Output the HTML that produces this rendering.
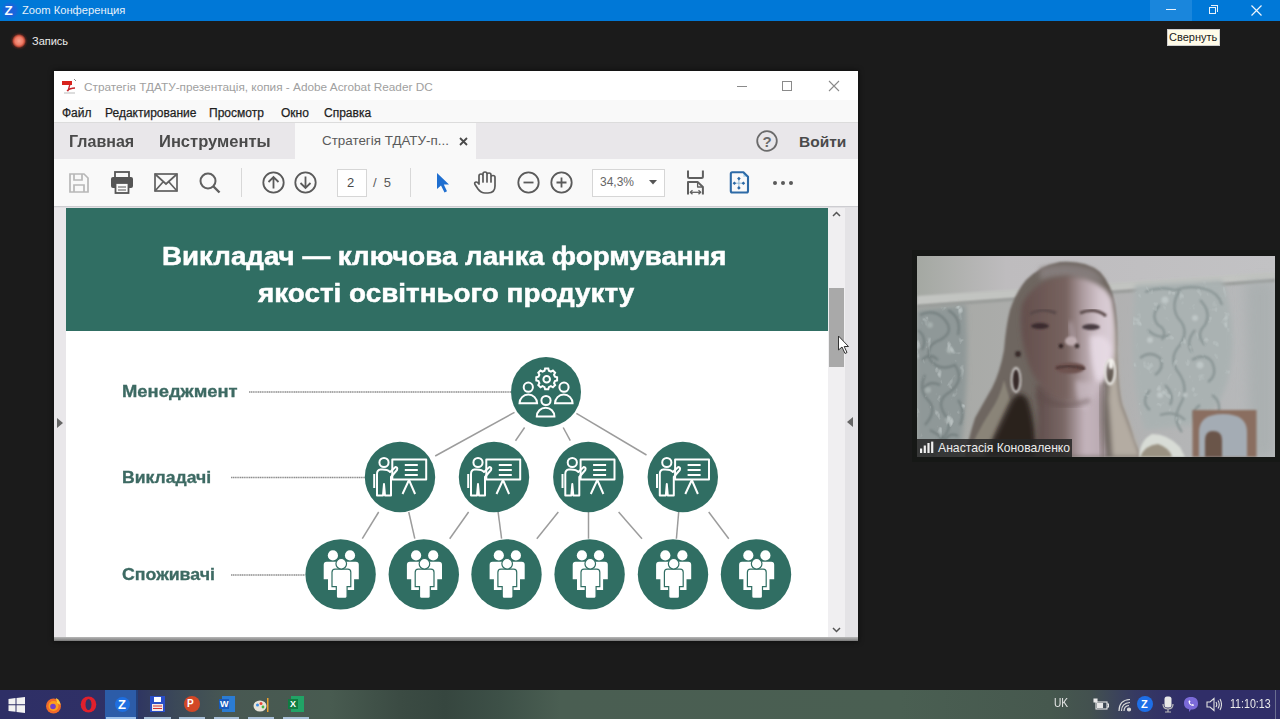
<!DOCTYPE html>
<html><head><meta charset="utf-8">
<style>
*{margin:0;padding:0;box-sizing:border-box}
html,body{width:1280px;height:719px;overflow:hidden;background:#1b1b1b;font-family:"Liberation Sans",sans-serif;position:relative}
.a{position:absolute}
.t{position:absolute;white-space:nowrap;line-height:1}
</style></head><body>

<!-- ZOOM TITLE BAR -->
<div class="a" style="left:0;top:0;width:1280px;height:21px;background:#0078d7"></div>
<div class="a" style="left:1150px;top:0;width:42px;height:21px;background:#1a86dc"></div>
<div id="ztitle">
<div class="a" style="left:1px;top:1px;width:18px;height:19px;border-radius:9px;background:radial-gradient(circle closest-side,#1a64dc 60%,rgba(26,100,220,0) 100%)"></div>
<div class="t" style="left:4.5px;top:3.5px;font-size:13.5px;font-weight:bold;color:#f4fbff">Z</div>
<div class="t" style="left:22px;top:5px;font-size:11.2px;color:#e6f0fa">Zoom Конференция</div>
<div class="a" style="left:1166px;top:9px;width:10px;height:1px;background:#e8f2fc"></div>
<div class="a" style="left:1209px;top:7px;width:7px;height:7px;border:1px solid #e8f2fc"></div>
<div class="a" style="left:1211px;top:5px;width:7px;height:7px;border-top:1px solid #e8f2fc;border-right:1px solid #e8f2fc"></div>
<svg class="a" style="left:1251px;top:5px" width="11" height="11"><path d="M0.5,0.5 L10.5,10.5 M10.5,0.5 L0.5,10.5" stroke="#eef5fc" stroke-width="1.2"/></svg>
<div class="a" style="left:9.5px;top:31.5px;width:18px;height:18px;border-radius:9px;background:radial-gradient(circle closest-side,#f6a290 0%,#ee7a64 45%,#c04c3a 62%,rgba(120,40,30,0.4) 78%,rgba(27,27,27,0) 100%)"></div>
<div class="t" style="left:32px;top:36px;font-size:11px;color:#ececec">Запись</div>
<div class="a" style="left:1167px;top:29px;width:53px;height:17px;background:#fffbe8;border:1px solid #cfcfcf"></div>
<div class="t" style="left:1169px;top:32px;font-size:11px;color:#1a1a1a">Свернуть</div>
</div>

<!-- ACROBAT WINDOW -->
<div class="a" style="left:54px;top:71px;width:804px;height:570px;background:#ffffff;box-shadow:0 0 5px 1px rgba(0,0,0,0.45)"></div>
<div id="acro">
<!-- title -->
<svg class="a" style="left:61px;top:78px" width="18" height="17" viewBox="0 0 18 17">
<path d="M1,3 L11,3 L11,7 L1,7 Z" fill="#d8221c"/>
<path d="M9,6 L7,13 M6,13 C8,11 11,10 14,10" stroke="#c8242a" stroke-width="1.3" fill="none"/>
<path d="M13,1 L15,3" stroke="#888" stroke-width="1"/>
<path d="M3,15 L14,15" stroke="#bbb" stroke-width="1"/>
</svg>
<div class="t" style="left:84px;top:82px;font-size:11.8px;color:#a0a0a0">Стратегія ТДАТУ-презентація, копия - Adobe Acrobat Reader DC</div>
<div class="a" style="left:737px;top:86px;width:10px;height:1px;background:#8a8a8a"></div>
<div class="a" style="left:782px;top:81px;width:10px;height:10px;border:1px solid #8a8a8a"></div>
<svg class="a" style="left:828px;top:80px" width="12" height="12"><path d="M1,1 L11,11 M11,1 L1,11" stroke="#8a8a8a" stroke-width="1.1"/></svg>
<!-- menu -->
<div class="a" style="left:54px;top:100px;width:804px;height:22px;background:#f9f9f9"></div>
<div class="t" style="left:62px;top:107px;font-size:12px;color:#1e1e1e;-webkit-text-stroke:0.25px #1e1e1e">Файл</div>
<div class="t" style="left:105px;top:107px;font-size:12px;color:#1e1e1e;-webkit-text-stroke:0.25px #1e1e1e">Редактирование</div>
<div class="t" style="left:209px;top:107px;font-size:12px;color:#1e1e1e;-webkit-text-stroke:0.25px #1e1e1e">Просмотр</div>
<div class="t" style="left:281px;top:107px;font-size:12px;color:#1e1e1e;-webkit-text-stroke:0.25px #1e1e1e">Окно</div>
<div class="t" style="left:324px;top:107px;font-size:12px;color:#1e1e1e;-webkit-text-stroke:0.25px #1e1e1e">Справка</div>
<!-- tab bar -->
<div class="a" style="left:54px;top:122px;width:804px;height:1px;background:#dcdcdc"></div>
<div class="a" style="left:54px;top:123px;width:241px;height:36px;background:#e9e7ea"></div>
<div class="a" style="left:476px;top:123px;width:382px;height:36px;background:#e9e7ea"></div>
<div class="a" style="left:295px;top:123px;width:181px;height:36px;background:#f9f9f9"></div>
<div class="t" style="left:69px;top:134px;font-size:16.8px;font-weight:bold;color:#4a4a4a;transform-origin:0 0;transform:scaleX(0.955)">Главная</div>
<div class="t" style="left:159px;top:134px;font-size:16.8px;font-weight:bold;color:#4a4a4a;transform-origin:0 0;transform:scaleX(0.985)">Инструменты</div>
<div class="t" style="left:322px;top:134px;font-size:13.4px;color:#5a5a5a">Стратегія ТДАТУ-п...</div>
<svg class="a" style="left:459px;top:137px" width="9" height="9"><path d="M1,1 L8,8 M8,1 L1,8" stroke="#4a4a4a" stroke-width="1.8"/></svg>
<svg class="a" style="left:756px;top:130px" width="22" height="22" viewBox="0 0 22 22"><circle cx="11" cy="11" r="9.8" fill="none" stroke="#6b6b6b" stroke-width="1.8"/><text x="11" y="16.5" text-anchor="middle" font-family="Liberation Sans" font-weight="bold" font-size="15" fill="#6b6b6b">?</text></svg>
<div class="t" style="left:799px;top:134px;font-size:15.5px;font-weight:bold;color:#4a4a4a">Войти</div>
<!-- toolbar -->
<div class="a" style="left:54px;top:159px;width:804px;height:47px;background:#f9f9f9"></div>
<div class="a" style="left:54px;top:206px;width:804px;height:1px;background:#cdcdd1"></div><div class="a" style="left:54px;top:207px;width:804px;height:1px;background:#e2e1e4"></div>
<!-- save -->
<svg class="a" style="left:68px;top:172px" width="22" height="22" viewBox="0 0 22 22" fill="none" stroke="#b8b8b8" stroke-width="1.7">
<path d="M2,2 L16,2 L20,6 L20,20 L2,20 Z"/><path d="M6,2 L6,8 L14,8 L14,2"/><path d="M6,20 L6,13 L16,13 L16,20"/></svg>
<!-- print -->
<svg class="a" style="left:110px;top:171px" width="24" height="23" viewBox="0 0 24 23">
<rect x="5" y="1" width="14" height="6" fill="none" stroke="#555" stroke-width="1.8"/>
<rect x="1" y="6" width="22" height="11" rx="2" fill="#555"/>
<rect x="5.5" y="12" width="13" height="10" fill="#fafafa" stroke="#555" stroke-width="1.8"/>
<path d="M8,16 L16,16 M8,19 L16,19" stroke="#555" stroke-width="1.2"/></svg>
<!-- mail -->
<svg class="a" style="left:154px;top:173px" width="24" height="19" viewBox="0 0 24 19" fill="none" stroke="#606060" stroke-width="1.7">
<rect x="1" y="1" width="22" height="17"/><path d="M1,1 L12,11 L23,1 M1,18 L9,9 M23,18 L15,9"/></svg>
<!-- search -->
<svg class="a" style="left:199px;top:172px" width="22" height="22" viewBox="0 0 22 22" fill="none" stroke="#606060" stroke-width="2">
<circle cx="9" cy="9" r="7.5"/><path d="M14.5,14.5 L20.5,20.5" stroke-width="2.4"/></svg>
<div class="a" style="left:241px;top:168px;width:1px;height:29px;background:#d8d8d8"></div>
<!-- up/down -->
<svg class="a" style="left:262px;top:171px" width="23" height="23" viewBox="0 0 23 23" fill="none" stroke="#5a5a5a" stroke-width="1.8">
<circle cx="11.5" cy="11.5" r="10.2"/><path d="M11.5,17.5 L11.5,6 M6.5,11 L11.5,6 L16.5,11"/></svg>
<svg class="a" style="left:294px;top:171px" width="23" height="23" viewBox="0 0 23 23" fill="none" stroke="#5a5a5a" stroke-width="1.8">
<circle cx="11.5" cy="11.5" r="10.2"/><path d="M11.5,5.5 L11.5,17 M6.5,12 L11.5,17 L16.5,12"/></svg>
<div class="a" style="left:337px;top:169px;width:30px;height:28px;background:#fff;border:1px solid #d6d6d6"></div>
<div class="t" style="left:347px;top:176px;font-size:13px;color:#4a4a4a">2</div>
<div class="t" style="left:373px;top:176px;font-size:13px;color:#5a5a5a">/&nbsp;&nbsp;5</div>
<div class="a" style="left:410px;top:168px;width:1px;height:29px;background:#d8d8d8"></div>
<!-- cursor -->
<svg class="a" style="left:435px;top:172px" width="16" height="21" viewBox="0 0 16 21">
<path d="M2,1 L2,17 L6,13.5 L9.5,20.5 L12,19.3 L8.8,12.5 L14,12.5 Z" fill="#1f6fd0"/></svg>
<!-- hand -->
<svg class="a" style="left:473px;top:171px" width="25" height="24" viewBox="0 0 25 24" fill="none" stroke="#5a5a5a" stroke-width="1.7" stroke-linejoin="round">
<path d="M6,13 L6,5 Q6,3 8,3 Q10,3 10,5 L10,11 L10,3 Q10,1 12,1 Q14,1 14,3 L14,11 L14,3.5 Q14,2 16,2 Q18,2 18,4 L18,11 L18,6 Q18,4.5 20,4.5 Q22,4.5 22,6.5 L22,15 Q22,22 15,22 L12,22 Q8,22 5,18 L2,13.5 Q1,11.5 3,11 Q4.5,10.8 6,13 Z"/></svg>
<!-- zoom out / in -->
<svg class="a" style="left:517px;top:171px" width="23" height="23" viewBox="0 0 23 23" fill="none" stroke="#5a5a5a" stroke-width="1.8">
<circle cx="11.5" cy="11.5" r="10.2"/><path d="M6.5,11.5 L16.5,11.5"/></svg>
<svg class="a" style="left:550px;top:171px" width="23" height="23" viewBox="0 0 23 23" fill="none" stroke="#5a5a5a" stroke-width="1.8">
<circle cx="11.5" cy="11.5" r="10.2"/><path d="M6.5,11.5 L16.5,11.5 M11.5,6.5 L11.5,16.5"/></svg>
<div class="a" style="left:592px;top:169px;width:73px;height:28px;background:#fff;border:1px solid #d6d6d6"></div>
<div class="t" style="left:600px;top:176px;font-size:12px;color:#666">34,3%</div>
<svg class="a" style="left:649px;top:180px" width="8" height="5"><path d="M0,0 L8,0 L4,4.5 Z" fill="#555"/></svg>
<!-- fit icon -->
<svg class="a" style="left:680px;top:165px" width="30" height="35" viewBox="680 165 30 35" fill="none" stroke="#5f5f5f" stroke-width="2" stroke-linejoin="round">
<path d="M688,170.6 L688,176.5 Q688,178 689.5,178 L701.4,178 Q702.9,178 702.9,176.5 L702.9,170.6"/>
<path d="M688,194.5 L688,181.9 L697.6,181.9 L702.9,187 L702.9,194.5"/>
<path d="M697.6,181.9 L697.6,187 L702.9,187" stroke-width="1.3"/>
<path d="M690.5,192.3 L700.5,192.3" stroke-width="1.3"/>
<path d="M692.5,190.3 L690.3,192.3 L692.5,194.3 M698.5,190.3 L700.7,192.3 L698.5,194.3" stroke-width="1.3"/>
</svg>
<!-- blue icon -->
<svg class="a" style="left:725px;top:167px" width="28" height="30" viewBox="725 167 28 30">
<path d="M743.4,172.3 L748,176.8 L743.4,176.8 Z" fill="#a8d4f0"/>
<path d="M732.3,172.3 L743.4,172.3 L748,176.8 L748,191 Q748,192.5 746.5,192.5 L732.3,192.5 Q730.8,192.5 730.8,191 L730.8,173.8 Q730.8,172.3 732.3,172.3 Z" fill="none" stroke="#2d6aa6" stroke-width="2.1" stroke-linejoin="round"/>
<path d="M738.9,178.6 L738.9,187.9 M734.4,183.2 L743.4,183.2" stroke="#8ab4d4" stroke-width="0.9"/>
<path d="M738.9,176.8 l1.8,1.8 l-1.8,1.8 l-1.8,-1.8 Z M738.9,186.1 l1.8,1.8 l-1.8,1.8 l-1.8,-1.8 Z M734.4,181.4 l1.8,1.8 l-1.8,1.8 l-1.8,-1.8 Z M743.4,181.4 l1.8,1.8 l-1.8,1.8 l-1.8,-1.8 Z" fill="#2d6aa6"/>
</svg>
<div class="a" style="left:773px;top:181px;width:4px;height:4px;border-radius:2px;background:#5a5a5a"></div>
<div class="a" style="left:781px;top:181px;width:4px;height:4px;border-radius:2px;background:#5a5a5a"></div>
<div class="a" style="left:789px;top:181px;width:4px;height:4px;border-radius:2px;background:#5a5a5a"></div>
<!-- doc area -->
<div class="a" style="left:54px;top:208px;width:12px;height:429px;background:#e9e7ea"></div>
<svg class="a" style="left:57px;top:418px" width="7" height="10"><path d="M0,0 L6,5 L0,10 Z" fill="#666"/></svg>
<div class="a" style="left:828px;top:208px;width:17px;height:429px;background:#f0eff1"></div>
<div class="a" style="left:845px;top:208px;width:13px;height:429px;background:#e4e3e6"></div>
<svg class="a" style="left:847px;top:417px" width="7" height="10"><path d="M6,0 L0,5 L6,10 Z" fill="#666"/></svg>
<div class="a" style="left:829px;top:288px;width:15px;height:79px;background:#a9a9a9"></div>
<svg class="a" style="left:832px;top:211px" width="9" height="6"><path d="M1,5 L4.5,1.5 L8,5" fill="none" stroke="#555" stroke-width="1.5"/></svg>
<svg class="a" style="left:832px;top:627px" width="9" height="6"><path d="M1,1 L4.5,4.5 L8,1" fill="none" stroke="#555" stroke-width="1.5"/></svg>
<div class="a" style="left:54px;top:637px;width:804px;height:4px;background:linear-gradient(#b8b8b8,#7a7a7a)"></div>
<!-- mouse pointer -->
<svg class="a" style="left:837px;top:334.5px" width="14" height="20" viewBox="0 0 14 20">
<path d="M1.5,1 L1.5,15 L5,12 L8,18.5 L10,17.5 L7.2,11.5 L11.5,11.5 Z" fill="#fff" stroke="#333" stroke-width="1"/></svg>
</div>

<!-- PAGE + DIAGRAM -->
<div id="page">
<div class="a" style="left:66px;top:208px;width:762px;height:429px;background:#ffffff"></div>
<div class="a" style="left:66px;top:208px;width:762px;height:123px;background:#306e63"></div>
<div class="t" style="left:161.5px;top:244px;font-size:25.5px;font-weight:bold;color:#ffffff;-webkit-text-stroke:0.5px #ffffff;transform-origin:0 0;transform:scaleX(1.087)">Викладач — ключова ланка формування</div>
<div class="t" style="left:257.5px;top:280.5px;font-size:25.5px;font-weight:bold;color:#ffffff;-webkit-text-stroke:0.5px #ffffff;transform-origin:0 0;transform:scaleX(1.092)">якості освітнього продукту</div>
<div class="t" style="left:122px;top:384.4px;font-size:16px;font-weight:bold;color:#3d6a63;-webkit-text-stroke:0.3px #3d6a63;transform-origin:0 0;transform:scaleX(1.15)">Менеджмент</div>
<div class="t" style="left:122px;top:469.9px;font-size:16px;font-weight:bold;color:#3d6a63;-webkit-text-stroke:0.3px #3d6a63;transform-origin:0 0;transform:scaleX(1.10)">Викладачі</div>
<div class="t" style="left:122px;top:566.6px;font-size:16px;font-weight:bold;color:#3d6a63;-webkit-text-stroke:0.3px #3d6a63;transform-origin:0 0;transform:scaleX(1.109)">Споживачі</div>
<svg class="a" style="left:0;top:0" width="1280" height="719" viewBox="0 0 1280 719">
<defs>
<g id="mgr" fill="none" stroke="#fff" stroke-width="2">
</g>
<g id="tch" fill="none" stroke="#fff" stroke-width="2" stroke-linejoin="round">
<circle cx="-16" cy="-14.5" r="4.6"/>
<rect x="-7.7" y="-17.5" width="33.9" height="19.9"/>
<path d="M4.8,-12 L17.8,-12 M4.8,-7 L17.8,-7 M4.8,-2 L17.8,-2" stroke-width="2.2"/>
<path d="M9,3 L2.5,17 M9,3 L15.1,17"/>
<path d="M-19.5,-7.5 Q-23,-7 -23,-3 L-23,18.5 L-17,18.5 L-16,7 L-15,18.5 L-9,18.5 L-9,0 L-3,-7 Q-2,-9.5 -4.5,-10 L-10,-5 Q-12,-8 -19.5,-7.5 Z"/>
<path d="M-25.8,-3 L-25.8,11"/>
</g>
<g id="grp">
<circle cx="-7.7" cy="-19" r="5.1" fill="#fff"/>
<circle cx="9.4" cy="-19" r="5.1" fill="#fff"/>
<path d="M-16.9,-9.7 Q-16.9,-12.7 -13.9,-12.7 L15.2,-12.7 Q18.2,-12.7 18.2,-9.7 L18.2,4.8 L13.5,4.8 L13.5,15.6 L-12.6,15.6 L-12.6,4.8 L-16.9,4.8 Z" fill="#fff"/>
<path d="M-8.6,-2.2 Q-8.6,-5.2 -5.6,-5.2 L7.2,-5.2 Q10.2,-5.2 10.2,-2.2 L10.2,12.3 L6.5,12.3 L6.5,22 Q6.5,24 4.5,24 L-2.3,24 Q-4.3,24 -4.3,22 L-4.3,12.3 L-8.6,12.3 Z" fill="#fff" stroke="#306e63" stroke-width="1.2"/>
<circle cx="0.65" cy="-10.6" r="5.3" fill="#fff" stroke="#306e63" stroke-width="1.2"/>
</g>
</defs>
<g stroke="#8e8e8e" stroke-width="1.6" stroke-dasharray="1.3 0.5">
<path d="M249,392 L511,392"/>
<path d="M231,477.5 L365,477.5"/>
<path d="M231,575 L305,575"/>
</g>
<g stroke="#9c9c9c" stroke-width="1.5">
<path d="M514.5,412.3 L435.2,456"/>
<path d="M524.6,427.5 L515.5,440.7"/>
<path d="M563.2,427.5 L570.3,440.7"/>
<path d="M576.4,413.3 L646.5,455"/>
<path d="M378.7,512 L362.3,538.7"/>
<path d="M408.75,512 L414.8,538.7"/>
<path d="M468.6,512 L449.7,538.7"/>
<path d="M498.1,512 L501.6,538.7"/>
<path d="M558.3,512 L536.8,538.7"/>
<path d="M588.5,512 L588.5,538.7"/>
<path d="M618.6,512 L642,538.7"/>
<path d="M678.7,512 L676.4,538.7"/>
<path d="M708.7,512 L728.8,538.7"/>
</g>
<g fill="#306e63">
<circle cx="546" cy="392" r="35"/>
<circle cx="400" cy="477" r="35.2"/><circle cx="494" cy="477" r="35.2"/><circle cx="588.3" cy="477" r="35.2"/><circle cx="682.8" cy="477" r="35.2"/>
<circle cx="340.6" cy="574.4" r="35.2"/><circle cx="423.8" cy="574.4" r="35.2"/><circle cx="506.5" cy="574.4" r="35.2"/><circle cx="589.6" cy="574.4" r="35.2"/><circle cx="673" cy="574.4" r="35.2"/><circle cx="756" cy="574.4" r="35.2"/>
</g>
<g fill="none" stroke="#fff" stroke-width="2">
<path d="M546.7,368.5 l1.6,0 l0.6,2.2 l2,0.9 l2,-1.1 l2.2,2.2 l-1.1,2 l0.9,2 l2.2,0.6 l0,3.2 l-2.2,0.6 l-0.9,2 l1.1,2 l-2.2,2.2 l-2,-1.1 l-2,0.9 l-0.6,2.2 l-3.2,0 l-0.6,-2.2 l-2,-0.9 l-2,1.1 l-2.2,-2.2 l1.1,-2 l-0.9,-2 l-2.2,-0.6 l0,-3.2 l2.2,-0.6 l0.9,-2 l-1.1,-2 l2.2,-2.2 l2,1.1 l2,-0.9 l0.6,-2.2 Z"/>
<circle cx="546.7" cy="379.3" r="3.3"/>
<circle cx="528.3" cy="387.2" r="4.6"/>
<path d="M519.5,403.3 A8.8,8.8 0 0 1 537.1,403.3 Z"/>
<circle cx="564" cy="387.2" r="4.6"/>
<path d="M555,403.3 A8.8,8.8 0 0 1 572.6,403.3 Z"/>
<circle cx="546" cy="400.5" r="4.6"/>
<path d="M536.8,416.5 A8.8,8.8 0 0 1 554.4,416.5 Z"/>
</g>
<use href="#tch" x="400" y="477"/><use href="#tch" x="494" y="477"/><use href="#tch" x="588.3" y="477"/><use href="#tch" x="682.8" y="477"/>
<use href="#grp" x="340.6" y="574.4"/><use href="#grp" x="423.8" y="574.4"/><use href="#grp" x="506.5" y="574.4"/><use href="#grp" x="589.6" y="574.4"/><use href="#grp" x="673" y="574.4"/><use href="#grp" x="756" y="574.4"/>
</svg>
</div>

<!-- VIDEO -->
<div id="video">
<div class="a" style="left:912px;top:250px;width:368px;height:212px;background:#161816"></div>
<svg class="a" style="left:917px;top:256px" width="358" height="201" viewBox="917 256 358 201">
<defs>
<filter id="b1" x="-20%" y="-20%" width="140%" height="140%"><feGaussianBlur stdDeviation="1.2"/></filter>
<filter id="b2" x="-30%" y="-30%" width="160%" height="160%"><feGaussianBlur stdDeviation="2.5"/></filter>
<filter id="b3" x="-50%" y="-50%" width="200%" height="200%"><feGaussianBlur stdDeviation="6"/></filter>
<filter id="wp" x="0" y="0" width="100%" height="100%"><feTurbulence type="turbulence" baseFrequency="0.09 0.07" numOctaves="2" seed="7" result="t"/><feColorMatrix in="t" type="matrix" values="0 0 0 0 0.50  0 0 0 0 0.55  0 0 0 0 0.55  -2.2 0 0 3.2 -0.9" result="c"/><feComposite in="c" in2="SourceGraphic" operator="in" result="m"/><feGaussianBlur in="m" stdDeviation="0.6"/></filter>
<linearGradient id="gw" x1="0" y1="0" x2="1" y2="0"><stop offset="0" stop-color="#a6a8a4"/><stop offset="0.5" stop-color="#b0b0b0"/><stop offset="1" stop-color="#b8babc"/></linearGradient>
<linearGradient id="gc" x1="0" y1="0" x2="1" y2="0"><stop offset="0" stop-color="#a4a8a2"/><stop offset="0.25" stop-color="#bebcbe"/><stop offset="1" stop-color="#c2c2c4"/></linearGradient>
<linearGradient id="gf" x1="1022" y1="0" x2="1114" y2="0" gradientUnits="userSpaceOnUse"><stop offset="0" stop-color="#644f4d"/><stop offset="0.48" stop-color="#77635f"/><stop offset="0.66" stop-color="#ad9ca0"/><stop offset="0.85" stop-color="#d4c6ce"/><stop offset="1" stop-color="#dccfd8"/></linearGradient>
<linearGradient id="gn" x1="1036" y1="0" x2="1106" y2="0" gradientUnits="userSpaceOnUse"><stop offset="0" stop-color="#5e4c4a"/><stop offset="0.4" stop-color="#7a6866"/><stop offset="0.7" stop-color="#c4b4bc"/><stop offset="1" stop-color="#b8a8b0"/></linearGradient>
</defs>
<rect x="917" y="256" width="358" height="201" fill="url(#gw)"/>
<path d="M917,256 L1275,256 L1275,273 L917,297 Z" fill="url(#gc)"/>
<path d="M917,296 L1275,272 L1275,279 L917,305 Z" fill="#c2c4c1" filter="url(#b1)"/>
<path d="M917,305 L1275,279 L1275,282 L917,308 Z" fill="#9a9c9a" filter="url(#b1)"/>
<path d="M1245,282 L1275,280 L1275,457 L1250,457 Z" fill="#a3aaaa" opacity="0.6" filter="url(#b3)"/>
<!-- wallpaper left -->
<path d="M917,310 L966,305 Q970,380 960,457 L917,457 Z" fill="#8f9898" filter="url(#b2)"/>
<g filter="url(#b1)" fill="none" stroke="#6f7a7a" stroke-width="2.2" opacity="0.8">
<path d="M920,315 Q935,308 945,320 Q955,332 940,340 Q925,345 930,360 Q940,372 955,365 Q965,380 950,392 Q935,400 945,415 Q955,428 940,440 Q925,448 935,457"/>
<path d="M918,330 Q928,338 922,350 M948,310 Q962,318 958,335 M925,375 Q918,390 928,400 Q938,410 925,425 M958,400 Q966,410 960,425 M930,430 Q945,438 955,450"/>
<path d="M922,360 Q930,352 938,360 M940,385 Q930,380 924,388 M945,440 Q950,432 958,436"/>
</g>
<g filter="url(#b1)" fill="#aab4b2" opacity="0.8">
<circle cx="930" cy="325" r="3"/><circle cx="950" cy="350" r="3.5"/><circle cx="928" cy="390" r="3"/><circle cx="948" cy="420" r="3"/><circle cx="935" cy="445" r="2.5"/>
</g>
<!-- wallpaper right -->
<path d="M1135,285 L1222,280 Q1240,330 1228,380 Q1215,420 1195,425 L1145,430 Q1128,380 1135,285 Z" fill="#aab2b2" filter="url(#b2)"/>
<g filter="url(#b1)" fill="none" stroke="#869292" stroke-width="2.3" opacity="0.9">
<path d="M1145,292 Q1160,286 1175,290 Q1190,285 1205,289 Q1218,292 1222,305"/>
<path d="M1180,290 Q1170,305 1178,318 Q1190,330 1180,345 Q1168,358 1178,372 Q1190,388 1180,405 Q1172,420 1182,432"/>
<path d="M1160,305 Q1150,315 1158,325 Q1168,330 1162,340 M1200,300 Q1212,312 1205,325 Q1195,335 1205,345 M1140,358 Q1150,350 1160,358 Q1165,368 1155,375"/>
<path d="M1192,360 Q1205,352 1212,362 Q1218,375 1208,382 M1150,390 Q1140,402 1150,410 M1212,395 Q1222,402 1218,415 M1160,415 Q1175,410 1185,420"/>
<path d="M1148,330 Q1158,340 1170,335 M1195,330 Q1185,342 1192,352 M1165,385 Q1175,395 1170,405 M1200,405 Q1190,412 1196,422"/>
</g>
<g filter="url(#b1)" fill="#c4cccc" opacity="0.8">
<circle cx="1165" cy="300" r="3.5"/><circle cx="1195" cy="318" r="3"/><circle cx="1150" cy="340" r="3"/><circle cx="1200" cy="365" r="3.5"/><circle cx="1160" cy="395" r="3"/><circle cx="1185" cy="395" r="2.5"/>
</g>
<path d="M917,310 L966,305 Q970,380 960,457 L917,457 Z" fill="#fff" filter="url(#wp)" opacity="0.9"/>
<path d="M1135,285 L1222,280 Q1240,330 1228,380 Q1215,420 1195,425 L1145,430 Q1128,380 1135,285 Z" fill="#fff" filter="url(#wp)" opacity="0.9"/>
<!-- icon frame -->
<rect x="1192.5" y="410" width="64" height="47" fill="#8a6e60" filter="url(#b1)"/>
<path d="M1199,457 L1199,432 Q1199,414 1223,414 Q1247,414 1247,432 L1247,457 Z" fill="#a4acb4" filter="url(#b1)"/>
<path d="M1205,457 L1205,440 Q1205,431 1213,431 Q1222,431 1222,440 L1222,457 Z" fill="#6a5448" filter="url(#b1)"/>
<!-- hair -->
<path d="M965,457 Q968,440 975,418 Q985,400 992,388 Q1000,372 1004,350 Q1006,325 1010,310 Q1016,292 1026,280 Q1040,266 1060,262 Q1085,260 1100,272 Q1112,285 1115,305 Q1118,325 1117,350 Q1118,390 1122,405 Q1130,425 1134,440 Q1138,450 1141,457 Z" fill="#6e6660" filter="url(#b1)"/>
<path d="M1103,290 Q1116,310 1117,350 Q1118,390 1122,405 Q1130,425 1141,457 L1112,457 Q1110,420 1108,400 Q1112,340 1100,292 Z" fill="#b4aca2" filter="url(#b2)"/>
<path d="M1040,268 Q1065,261 1092,269 Q1102,276 1104,283 Q1070,272 1040,280 Z" fill="#847c7a" filter="url(#b2)"/>
<path d="M968,457 Q975,435 990,412 Q1000,398 1004,380 L1010,400 Q995,430 985,457 Z" fill="#8a8478" filter="url(#b1)"/>
<path d="M985,457 Q1000,425 1012,400 Q1020,388 1028,400 Q1036,425 1036,457 Z" fill="#2c201c" filter="url(#b2)"/>
<!-- neck -->
<path d="M1036,385 L1104,385 Q1100,420 1106,457 L1036,457 Q1040,420 1036,385 Z" fill="url(#gn)" filter="url(#b2)"/>
<!-- face -->
<path d="M1022,305 Q1034,278 1068,276 Q1102,278 1112,300 Q1116,330 1113,358 Q1106,392 1074,402 Q1042,398 1030,368 Q1018,335 1022,305 Z" fill="url(#gf)" filter="url(#b2)"/>
<path d="M1090,336 Q1108,332 1112,350 Q1110,372 1098,385 Q1090,365 1090,336 Z" fill="#e8dce6" opacity="0.85" filter="url(#b2)"/>
<path d="M1076,380 Q1090,385 1100,380 Q1098,400 1085,410 Q1075,400 1076,380 Z" fill="#cabcc4" opacity="0.7" filter="url(#b2)"/>
<path d="M1101,385 Q1099,420 1103,457" stroke="#5a504a" stroke-width="2.5" fill="none" opacity="0.7" filter="url(#b2)"/>
<path d="M1036,395 Q1060,412 1090,400" stroke="#5e4c4a" stroke-width="4" fill="none" opacity="0.6" filter="url(#b2)"/>
<!-- eyes brows nose mouth -->
<ellipse cx="1040" cy="326" rx="9" ry="3" fill="#3a2c2e" filter="url(#b1)"/>
<ellipse cx="1091" cy="327" rx="9" ry="3" fill="#463a40" filter="url(#b1)"/>
<path d="M1030,314 Q1042,307 1056,313 M1080,313 Q1095,307 1106,316" stroke="#5a4a4a" stroke-width="3" fill="none" filter="url(#b1)"/>
<path d="M1070,322 Q1072,335 1074,344" stroke="#b8a8b0" stroke-width="3" fill="none" filter="url(#b2)"/>
<ellipse cx="1071" cy="341" rx="6" ry="4.5" fill="#c4b2b6" opacity="0.9" filter="url(#b1)"/>
<circle cx="1061" cy="346" r="2.3" fill="#2e2222" filter="url(#b1)"/>
<circle cx="1077" cy="346" r="2.3" fill="#3a2e2e" filter="url(#b1)"/>
<ellipse cx="1070" cy="368" rx="15" ry="5.5" fill="#6e5250" filter="url(#b1)"/>
<path d="M1056,368 Q1070,364 1085,369" stroke="#3e2a2a" stroke-width="1.6" fill="none" filter="url(#b1)"/>
<!-- earrings -->
<ellipse cx="1018" cy="354" rx="3" ry="3" fill="#2a1e1e" opacity="0.8" filter="url(#b1)"/>
<ellipse cx="1016" cy="380" rx="4.5" ry="12" fill="#2a1e1c" opacity="0.8" filter="url(#b1)"/>
<ellipse cx="1016" cy="380" rx="4.5" ry="12" fill="none" stroke="#dcdad8" stroke-width="1.8" filter="url(#b1)"/>
<ellipse cx="1110" cy="372" rx="5" ry="12" fill="#3a302c" opacity="0.6" filter="url(#b1)"/>
<ellipse cx="1110" cy="372" rx="5" ry="12" fill="none" stroke="#eeece8" stroke-width="2.3" filter="url(#b1)"/>
<ellipse cx="1111" cy="364" rx="2.5" ry="5" fill="#f4f2ee" filter="url(#b1)"/>
<!-- shirt -->
<path d="M1139,457 Q1140,440 1152,434 Q1168,434 1180,447 L1185,457 Z" fill="#d8dcd6" filter="url(#b1)"/>
<path d="M1140,457 Q1145,445 1158,444 Q1170,448 1172,457 Z" fill="#9a9282" filter="url(#b1)"/>
<!-- name label -->
<rect x="917" y="439" width="155" height="18" fill="#262626" opacity="0.85"/>
<rect x="920" y="448.5" width="2.2" height="4.5" fill="#f0f0f0"/><rect x="923.7" y="445.5" width="2.2" height="7.5" fill="#f0f0f0"/><rect x="927.4" y="443" width="2.2" height="10" fill="#f0f0f0"/><rect x="931.1" y="441.6" width="2.2" height="11.4" fill="#f0f0f0"/>
</svg>
<div class="t" style="left:938px;top:442px;font-size:12.2px;color:#ececec">Анастасія Коноваленко</div>
</div>

<!-- TASKBAR -->
<div class="a" style="left:0;top:690px;width:1280px;height:29px;background:linear-gradient(90deg,#2e2f66 0.00%,#2f3066 7.81%,#2f3662 10.78%,#3b4858 13.67%,#485852 17.97%,#485b50 25.78%,#3b4b43 31.25%,#36463f 34.77%,#3d5047 39.06%,#4a5e52 43.75%,#4a5f52 70.31%,#46584e 82.03%,#43514f 85.16%,#363a62 88.67%,#302e68 92.19%,#302e68 100.00%)"></div>
<div id="taskbar">
<!-- windows logo -->
<svg class="a" style="left:8px;top:697px" width="18" height="16" viewBox="0 0 18 16" fill="#f2f2f2">
<path d="M0.5,2 L7.5,1 L7.5,7.3 L0.5,7.3 Z M8.5,0.9 L17,0 L17,7.3 L8.5,7.3 Z M0.5,8.3 L7.5,8.3 L7.5,14.8 L0.5,14 Z M8.5,8.3 L17,8.3 L17,16 L8.5,15 Z"/></svg>
<!-- firefox -->
<svg class="a" style="left:45px;top:697px" width="17" height="17" viewBox="0 0 17 17">
<circle cx="8.5" cy="9" r="7.5" fill="#f26a2a"/><circle cx="8.5" cy="9" r="5" fill="#ff9f1c"/><circle cx="8" cy="9.5" r="2.8" fill="#7540c9"/><path d="M11,1 Q15,3 15.5,8 L12,6 Z" fill="#ffcf3a"/></svg>
<!-- opera -->
<svg class="a" style="left:80px;top:696px" width="17" height="17" viewBox="0 0 17 17">
<ellipse cx="8.5" cy="8.5" rx="7.8" ry="8" fill="#e0202c"/><ellipse cx="8.5" cy="8.5" rx="3" ry="5.5" fill="#2f3466"/></svg>
<!-- zoom active -->
<div class="a" style="left:105px;top:690px;width:31px;height:29px;background:#2c5ca8"></div>
<div class="a" style="left:136px;top:690px;width:2px;height:29px;background:#23407a"></div>
<div class="a" style="left:106px;top:717px;width:30px;height:2px;background:#9cc0ea"></div>
<div class="a" style="left:115px;top:697px;width:15px;height:15px;border-radius:8px;background:#1f6fe0"></div>
<div class="t" style="left:118px;top:698px;font-size:13px;font-weight:bold;color:#fff">Z</div>
<!-- floppy -->
<svg class="a" style="left:150px;top:696px" width="15" height="16" viewBox="0 0 15 16">
<rect x="0" y="0" width="15" height="16" fill="#2a4ec8"/><rect x="4" y="1" width="7" height="5" fill="#fff"/><rect x="2" y="8" width="11" height="7" fill="#f0e8e8"/><path d="M3,10 L12,10 M3,12.5 L12,12.5" stroke="#d23030" stroke-width="1.2"/></svg>
<!-- ppt -->
<div class="a" style="left:184px;top:696px;width:16px;height:16px;border-radius:8px;background:#d24726"></div>
<div class="t" style="left:187px;top:699px;font-size:10px;font-weight:bold;color:#fff">P</div>
<!-- word -->
<div class="a" style="left:222px;top:696px;width:13px;height:16px;background:#2b7cd3"></div>
<div class="a" style="left:219px;top:699px;width:10px;height:10px;background:#185abd"></div>
<div class="t" style="left:220px;top:700px;font-size:9px;font-weight:bold;color:#fff">W</div>
<!-- paint -->
<svg class="a" style="left:253px;top:696px" width="18" height="17" viewBox="0 0 18 17">
<ellipse cx="7" cy="10" rx="6.5" ry="5.5" fill="#e8e4d8"/><circle cx="4.5" cy="9" r="1.5" fill="#3a8ee8"/><circle cx="8" cy="7.5" r="1.5" fill="#e84a3a"/><circle cx="10" cy="11" r="1.4" fill="#48b848"/><path d="M14,2 L15.5,2 L15.5,16 L14,16 Z" fill="#e8a030"/></svg>
<!-- excel -->
<div class="a" style="left:291px;top:696px;width:13px;height:16px;background:#21a366"></div>
<div class="a" style="left:288px;top:699px;width:10px;height:10px;background:#107c41"></div>
<div class="t" style="left:290px;top:700px;font-size:9px;font-weight:bold;color:#fff">X</div>
<!-- running underlines -->
<div class="a" style="left:144px;top:717px;width:27px;height:2px;background:#a9c0d8"></div>
<div class="a" style="left:179px;top:717px;width:26px;height:2px;background:#a9c0d8"></div>
<div class="a" style="left:214px;top:717px;width:25px;height:2px;background:#a9c0d8"></div>
<div class="a" style="left:248px;top:717px;width:26px;height:2px;background:#a9c0d8"></div>
<div class="a" style="left:283px;top:717px;width:26px;height:2px;background:#a9c0d8"></div>
<!-- tray -->
<div class="t" style="left:1054px;top:697px;font-size:12px;color:#e8e8e8;transform-origin:0 0;transform:scaleX(0.85)">UK</div>
<svg class="a" style="left:1093px;top:698px" width="16" height="13" viewBox="0 0 16 13" fill="none" stroke="#e8e8e8" stroke-width="1.1">
<rect x="3" y="4" width="11" height="7"/><path d="M14,6 L15.5,6 L15.5,9 L14,9"/><rect x="4.5" y="5.5" width="5" height="4" fill="#e8e8e8"/><path d="M1,1 L4,1 L4,4 L1,4 Z" fill="#e8e8e8"/></svg>
<svg class="a" style="left:1118px;top:697px" width="14" height="15" viewBox="0 0 14 15" fill="none" stroke="#dcdcdc" stroke-width="1.2">
<path d="M1,14 Q1,3 12,2.5 M3.5,14 Q3.5,6 12,5.5 M6,14 Q6,9 11,8.5"/><circle cx="11" cy="12.5" r="1.5" fill="#dcdcdc"/></svg>
<div class="a" style="left:1137px;top:696px;width:16px;height:16px;border-radius:8px;background:#1e6fe8"></div>
<div class="t" style="left:1141px;top:699px;font-size:11px;font-weight:bold;color:#fff">Z</div>
<svg class="a" style="left:1162px;top:696px" width="12" height="17" viewBox="0 0 12 17">
<rect x="2.5" y="0.5" width="7" height="11" rx="2.5" fill="#e8e8e8"/><path d="M1,8 Q1,13 6,13 Q11,13 11,8 M6,13 L6,16 M3,16 L9,16" stroke="#bbb" stroke-width="1.2" fill="none"/></svg>
<svg class="a" style="left:1183px;top:696px" width="16" height="17" viewBox="0 0 16 17">
<path d="M8,1 C13,1 15,3.5 15,7.5 C15,11.5 12.5,13.5 8,13.5 L6,16 L6,13.3 C2.5,12.5 1,10.5 1,7.5 C1,3.5 3,1 8,1 Z" fill="#7b6ad8"/><path d="M5.5,5 Q5.5,9.5 10.5,10 L11,8.8 L9.5,8 L8.8,8.8 Q7,8 6.8,6.5 L7.5,5.8 L6.8,4.3 Z" fill="#fff"/></svg>
<svg class="a" style="left:1206px;top:697px" width="16" height="15" viewBox="0 0 16 15" fill="none" stroke="#e0e0e0" stroke-width="1.1">
<path d="M1,5 L4,5 L8,1.5 L8,13.5 L4,10 L1,10 Z"/><path d="M10,5 Q11.5,7.5 10,10 M12,3.5 Q14.5,7.5 12,11.5 M14,2 Q17,7.5 14,13"/></svg>
<div class="t" style="left:1230px;top:698px;font-size:12.5px;color:#ececec;transform-origin:0 0;transform:scaleX(0.85)">11:10:13</div>
<div class="a" style="left:1275px;top:690px;width:1px;height:29px;background:#6a6e90"></div>
</div>

</body></html>
